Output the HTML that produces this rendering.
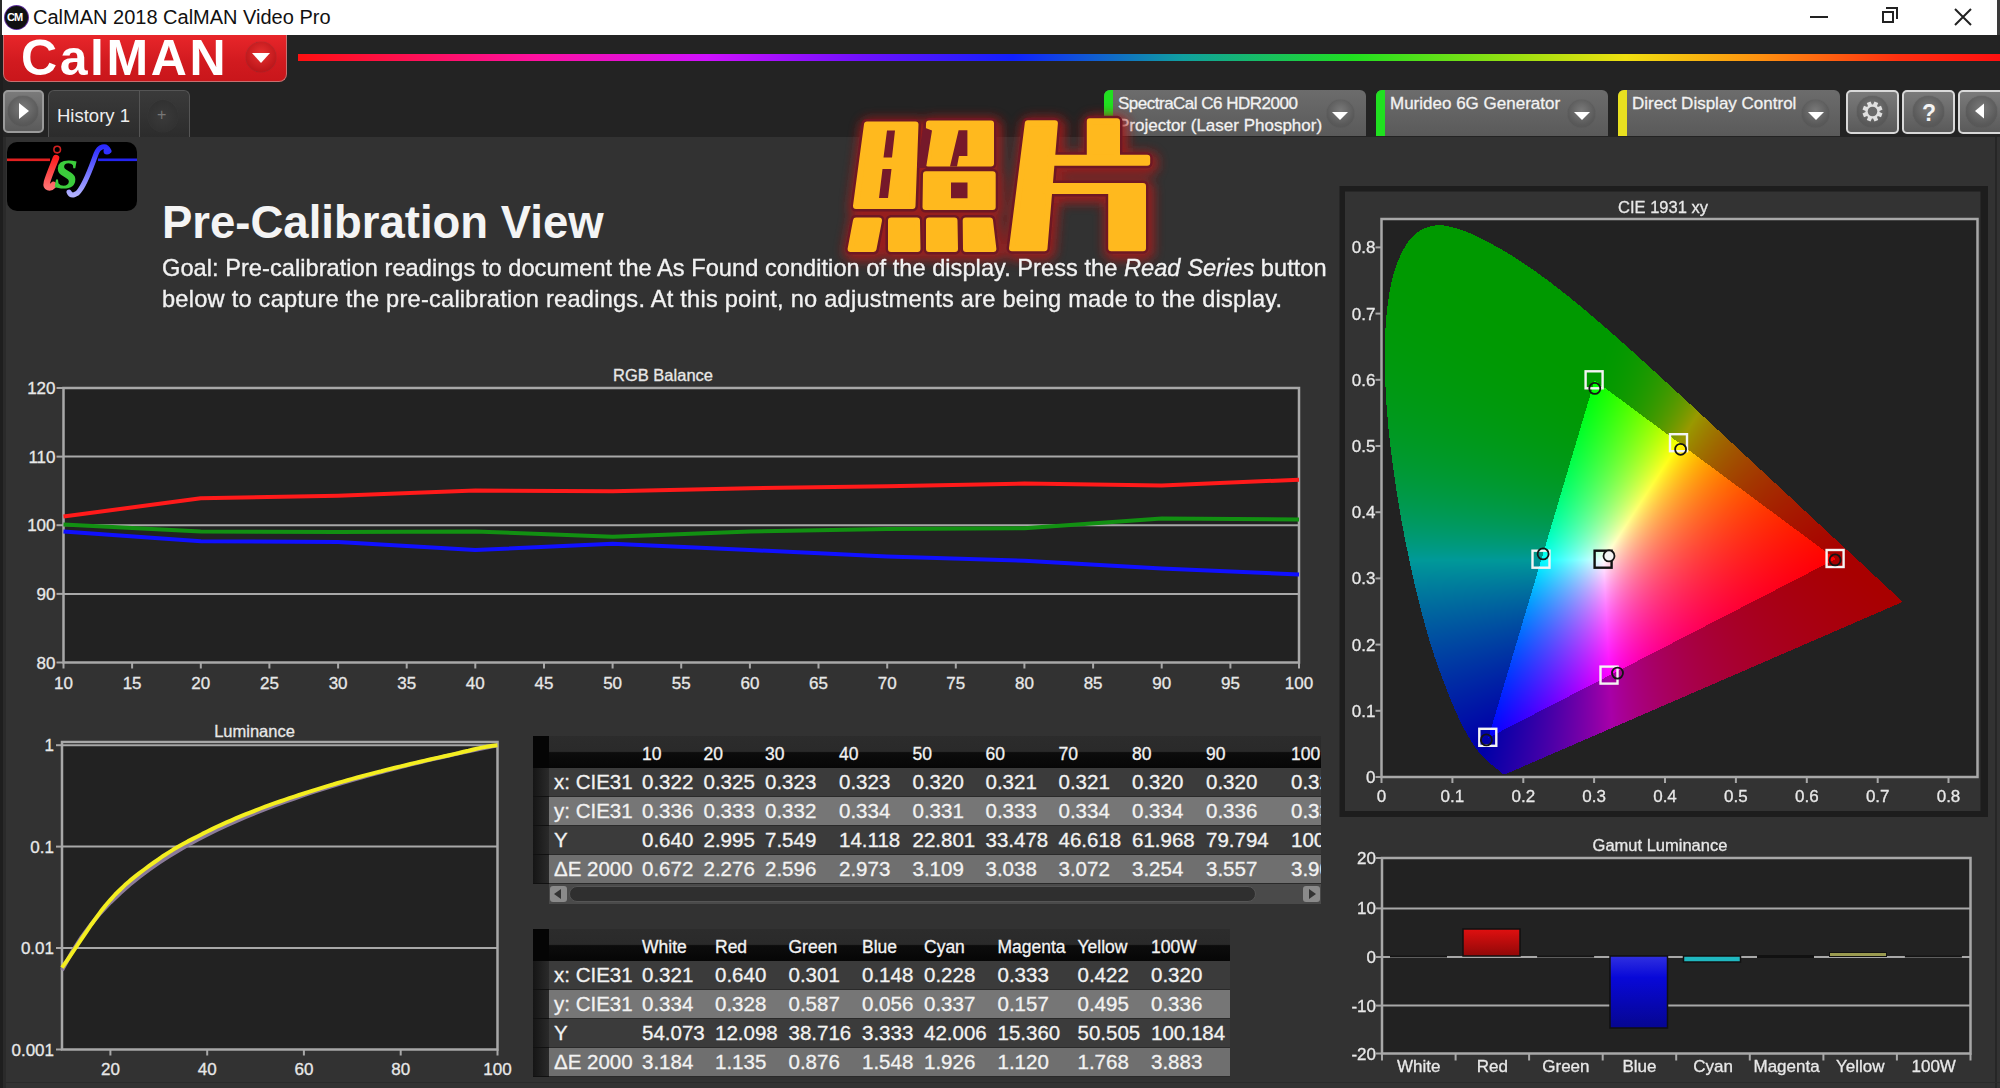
<!DOCTYPE html>
<html><head><meta charset="utf-8">
<style>
*{margin:0;padding:0;box-sizing:border-box}
html,body{width:2000px;height:1088px;overflow:hidden;background:#323232;font-family:"Liberation Sans",sans-serif;position:relative}
.a{position:absolute}
.t{position:absolute;white-space:nowrap;line-height:1}
#titlebar{left:0;top:0;width:2000px;height:35px;background:#fff}
#hdr{left:0;top:35px;width:2000px;height:102px;background:#232323}
#logo{left:3px;top:35px;width:284px;height:47px;border-radius:0 0 8px 8px;background:linear-gradient(#e8262a,#d11a1f 60%,#c9161b);border:1px solid #c87070;border-top:none}
#rainbow{left:298px;top:54px;width:1702px;height:7px;background:linear-gradient(90deg,#ff1010 0%,#ff10a0 14%,#d010ff 24%,#7010ff 33%,#1020ff 42%,#10a0a0 52%,#20e020 62%,#a0e010 72%,#f0e010 78%,#ff9010 86%,#ff3010 94%,#ff1010 100%)}
.dev{position:absolute;top:90px;height:46px;border-radius:6px 6px 0 0;background:linear-gradient(#6c6c6c,#5a5a5a);overflow:hidden}
.dev .bar{position:absolute;left:0;top:0;width:9px;height:46px}
.dev .txt{position:absolute;left:14px;top:3px;color:#f2f2f2;font-size:17px;line-height:21.5px;white-space:nowrap;-webkit-text-stroke:0.3px #f2f2f2}
.circ{position:absolute;border-radius:50%;background:radial-gradient(circle at 50% 40%,#7a7a7a,#5a5a5a 65%,#505050);box-shadow:0 0 1px #444}
.tri{position:absolute;width:0;height:0;border-left:9px solid transparent;border-right:9px solid transparent;border-top:10px solid #fff}
.ax{font-family:"Liberation Sans",sans-serif;font-size:17px;fill:#e8e8e8;stroke:#e8e8e8;stroke-width:0.3px}
.ttl{font-family:"Liberation Sans",sans-serif;font-size:16.5px;fill:#e8e8e8;stroke:#e8e8e8;stroke-width:0.3px}
.th{font-size:17.5px;color:#f2f2f2;-webkit-text-stroke:0.3px #f2f2f2}
.td{font-size:20.5px;color:#f2f2f2;-webkit-text-stroke:0.3px #f2f2f2}
.btn{position:absolute;top:90px;height:44px;border-radius:5px;background:linear-gradient(#7a7a7a,#5a5a5a);border:2px solid #9a9a9a}
</style></head><body>
<div id="titlebar" class="a"></div>
<div class="a" style="left:0;top:35px;width:3px;height:1053px;background:#1e1e1e;z-index:5"></div><div class="a" style="left:3px;top:137px;width:3px;height:951px;background:#2a2a2a"></div><div class="a" style="left:0;top:0;width:2px;height:35px;background:#2a2a2a"></div><div class="a" style="left:1995px;top:137px;width:2px;height:951px;background:#262626"></div><div class="a" style="left:1997px;top:0;width:3px;height:35px;background:#3a3a3a"></div><div class="a" style="left:0;top:1082px;width:2000px;height:1px;background:#2a2a2a"></div>
<!-- CM icon -->
<div class="a" style="left:5px;top:6px;width:23px;height:23px;border-radius:50%;background:#111;box-shadow:0 0 0 1px #6030a0"></div>
<div class="t" style="left:7px;top:12px;font-size:11px;font-weight:bold;color:#fff;letter-spacing:-1px">CM</div>
<div class="t" style="left:33px;top:7px;font-size:20px;color:#111">CalMAN 2018 CalMAN Video Pro</div>
<!-- window controls -->
<div class="a" style="left:1810px;top:16px;width:18px;height:2px;background:#222"></div>
<div class="a" style="left:1882px;top:11px;width:12px;height:12px;border:2px solid #222"></div>
<div class="a" style="left:1886px;top:7px;width:12px;height:12px;border-top:2px solid #222;border-right:2px solid #222"></div>
<svg class="a" style="left:1953px;top:7px" width="20" height="20"><path d="M2 2L18 18M18 2L2 18" stroke="#222" stroke-width="2"/></svg>

<div id="hdr" class="a"></div>
<div id="logo" class="a"></div>
<div class="t" style="left:21px;top:33px;font-size:50px;font-weight:bold;color:#fff;letter-spacing:2.6px">CalMAN</div>
<div class="circ" style="left:246px;top:42px;width:30px;height:30px;background:radial-gradient(circle at 50% 40%,#e83030,#b81418 80%)"></div>
<div class="tri" style="left:252px;top:53px"></div>
<div id="rainbow" class="a"></div>

<!-- tabs -->
<div class="btn" style="left:3px;width:41px;top:90px;height:43px"></div>
<div class="circ" style="left:8px;top:96px;width:30px;height:30px"></div>
<div class="a" style="left:19px;top:103px;width:0;height:0;border-top:8px solid transparent;border-bottom:8px solid transparent;border-left:10px solid #fff"></div>
<div class="a" style="left:48px;top:90px;width:142px;height:47px;border-radius:6px 6px 0 0;background:linear-gradient(#3a3a3a,#2c2c2c);border:1px solid #555;border-bottom:none"></div>
<div class="a" style="left:139px;top:91px;width:1px;height:46px;background:#555"></div>
<div class="t" style="left:57px;top:106.5px;font-size:18.5px;color:#eee">History 1</div>
<div class="circ" style="left:148px;top:100px;width:30px;height:32px;background:radial-gradient(circle,#3a3a3a,#2e2e2e)"></div>
<div class="t" style="left:157px;top:107px;font-size:16px;color:#777">+</div>

<!-- devices -->
<div class="dev" style="left:1104px;width:262px"><div class="bar" style="background:#20e020"></div><div class="txt"><span style="letter-spacing:-0.5px">SpectraCal C6 HDR2000</span><br>Projector (Laser Phosphor)</div></div>
<div class="circ" style="left:1327px;top:100px;width:27px;height:27px"></div><div class="tri" style="left:1332px;top:112px;border-width:8px 8px 0 8px"></div>
<div class="dev" style="left:1376px;width:232px"><div class="bar" style="background:#20e020"></div><div class="txt">Murideo 6G Generator</div></div>
<div class="circ" style="left:1568px;top:100px;width:27px;height:27px"></div><div class="tri" style="left:1574px;top:112px;border-width:8px 8px 0 8px"></div>
<div class="dev" style="left:1618px;width:222px"><div class="bar" style="background:#e8e020"></div><div class="txt">Direct Display Control</div></div>
<div class="circ" style="left:1802px;top:100px;width:27px;height:27px"></div><div class="tri" style="left:1808px;top:112px;border-width:8px 8px 0 8px"></div>
<div class="btn" style="left:1846px;width:53px;border-color:#d8d8d8"></div>
<div class="btn" style="left:1902px;width:53px;border-color:#d8d8d8"></div>
<div class="btn" style="left:1958px;width:50px;border-color:#d8d8d8"></div>
<div class="circ" style="left:1857px;top:96px;width:31px;height:31px"></div>
<div class="circ" style="left:1913px;top:96px;width:31px;height:31px"></div>
<div class="circ" style="left:1966px;top:96px;width:31px;height:31px"></div>
<svg class="a" style="left:0;top:0" width="2000" height="140"><polygon points="1879.5,112.1 1882.5,113.5 1881.0,117.2 1877.9,116.0 1877.0,116.9 1878.2,120.0 1874.5,121.5 1873.1,118.5 1871.9,118.5 1870.5,121.5 1866.8,120.0 1868.0,116.9 1867.1,116.0 1864.0,117.2 1862.5,113.5 1865.5,112.1 1865.5,110.9 1862.5,109.5 1864.0,105.8 1867.1,107.0 1868.0,106.1 1866.8,103.0 1870.5,101.5 1871.9,104.5 1873.1,104.5 1874.5,101.5 1878.2,103.0 1877.0,106.1 1877.9,107.0 1881.0,105.8 1882.5,109.5 1879.5,110.9" fill="#e0e0e0"/><circle cx="1872.5" cy="111.5" r="4.8" fill="#6a6a6a"/><polygon points="1975,111 1984,103.5 1984,118.5" fill="#fff"/></svg>
<div class="t" style="left:1922px;top:102px;font-size:23px;font-weight:bold;color:#f4f4f4">?</div>


<!-- isf logo -->
<svg class="a" style="left:0;top:0" width="150" height="220">
<defs><linearGradient id="lgi" x1="0" y1="0" x2="0" y2="1"><stop offset="0" stop-color="#ff2020"/><stop offset="1" stop-color="#ff7070"/></linearGradient>
<linearGradient id="lgf" x1="0" y1="0" x2="0" y2="1"><stop offset="0" stop-color="#2a2aff"/><stop offset="1" stop-color="#b0b0ff"/></linearGradient></defs>
<rect x="7" y="142" width="130" height="69" rx="10" fill="#000"/>
<rect x="7" y="158.5" width="43" height="2.6" fill="#e02020"/>
<rect x="98" y="158.5" width="39" height="2.6" fill="#2424f0"/>
<circle cx="57.2" cy="149.6" r="3.3" fill="none" stroke="#d02020" stroke-width="1.6"/>
<path d="M56 158 C53 166 49 175 47 182 C45.5 188 50 189 53.5 185" fill="none" stroke="url(#lgi)" stroke-width="6.5" stroke-linecap="round"/>
<text x="55" y="188" font-family="Liberation Serif" font-style="italic" font-weight="bold" font-size="60" fill="#3ccc3c">s</text>
<path d="M109 151 C106 144 99 146 96 154 C91 168 86 182 80 190 C77 195 71 197 69 192" fill="none" stroke="url(#lgf)" stroke-width="5" stroke-linecap="round"/>
<circle cx="107" cy="151" r="3.5" fill="#3030ff"/>
</svg>
<!-- title -->
<div class="t" style="left:162px;top:200px;font-size:45.5px;font-weight:bold;color:#f4f4f4">Pre-Calibration View</div>
<div class="t" style="left:162px;top:256.5px;z-index:4;font-size:23.6px;-webkit-text-stroke:0.35px #f2f2f2;color:#f2f2f2;letter-spacing:0.04px">Goal: Pre-calibration readings to document the As Found condition of the display. Press the <i>Read Series</i> button</div><div class="t" style="left:162px;top:287.5px;z-index:4;font-size:23.6px;-webkit-text-stroke:0.35px #f2f2f2;color:#f2f2f2;letter-spacing:0.24px">below to capture the pre-calibration readings. At this point, no adjustments are being made to the display.</div>
<svg class="a" style="left:0;top:0" width="2000" height="1088"><rect x="63.5" y="388" width="1235.5" height="274.5" fill="#222"/><line x1="63.5" y1="456.6" x2="1299" y2="456.6" stroke="#a8a8a8" stroke-width="2"/><line x1="63.5" y1="525.2" x2="1299" y2="525.2" stroke="#a8a8a8" stroke-width="2"/><line x1="63.5" y1="593.9" x2="1299" y2="593.9" stroke="#a8a8a8" stroke-width="2"/><rect x="63.5" y="388" width="1235.5" height="274.5" fill="none" stroke="#a8a8a8" stroke-width="2.5"/><line x1="56.5" y1="388.0" x2="63.5" y2="388.0" stroke="#a8a8a8" stroke-width="2"/><text x="55.5" y="394.0" text-anchor="end" class="ax">120</text><line x1="56.5" y1="456.6" x2="63.5" y2="456.6" stroke="#a8a8a8" stroke-width="2"/><text x="55.5" y="462.6" text-anchor="end" class="ax">110</text><line x1="56.5" y1="525.2" x2="63.5" y2="525.2" stroke="#a8a8a8" stroke-width="2"/><text x="55.5" y="531.2" text-anchor="end" class="ax">100</text><line x1="56.5" y1="593.9" x2="63.5" y2="593.9" stroke="#a8a8a8" stroke-width="2"/><text x="55.5" y="599.9" text-anchor="end" class="ax">90</text><line x1="56.5" y1="662.5" x2="63.5" y2="662.5" stroke="#a8a8a8" stroke-width="2"/><text x="55.5" y="668.5" text-anchor="end" class="ax">80</text><line x1="63.5" y1="662.5" x2="63.5" y2="668.5" stroke="#a8a8a8" stroke-width="2"/><text x="63.5" y="688.5" text-anchor="middle" class="ax">10</text><line x1="132.1" y1="662.5" x2="132.1" y2="668.5" stroke="#a8a8a8" stroke-width="2"/><text x="132.1" y="688.5" text-anchor="middle" class="ax">15</text><line x1="200.8" y1="662.5" x2="200.8" y2="668.5" stroke="#a8a8a8" stroke-width="2"/><text x="200.8" y="688.5" text-anchor="middle" class="ax">20</text><line x1="269.4" y1="662.5" x2="269.4" y2="668.5" stroke="#a8a8a8" stroke-width="2"/><text x="269.4" y="688.5" text-anchor="middle" class="ax">25</text><line x1="338.1" y1="662.5" x2="338.1" y2="668.5" stroke="#a8a8a8" stroke-width="2"/><text x="338.1" y="688.5" text-anchor="middle" class="ax">30</text><line x1="406.7" y1="662.5" x2="406.7" y2="668.5" stroke="#a8a8a8" stroke-width="2"/><text x="406.7" y="688.5" text-anchor="middle" class="ax">35</text><line x1="475.3" y1="662.5" x2="475.3" y2="668.5" stroke="#a8a8a8" stroke-width="2"/><text x="475.3" y="688.5" text-anchor="middle" class="ax">40</text><line x1="544.0" y1="662.5" x2="544.0" y2="668.5" stroke="#a8a8a8" stroke-width="2"/><text x="544.0" y="688.5" text-anchor="middle" class="ax">45</text><line x1="612.6" y1="662.5" x2="612.6" y2="668.5" stroke="#a8a8a8" stroke-width="2"/><text x="612.6" y="688.5" text-anchor="middle" class="ax">50</text><line x1="681.2" y1="662.5" x2="681.2" y2="668.5" stroke="#a8a8a8" stroke-width="2"/><text x="681.2" y="688.5" text-anchor="middle" class="ax">55</text><line x1="749.9" y1="662.5" x2="749.9" y2="668.5" stroke="#a8a8a8" stroke-width="2"/><text x="749.9" y="688.5" text-anchor="middle" class="ax">60</text><line x1="818.5" y1="662.5" x2="818.5" y2="668.5" stroke="#a8a8a8" stroke-width="2"/><text x="818.5" y="688.5" text-anchor="middle" class="ax">65</text><line x1="887.2" y1="662.5" x2="887.2" y2="668.5" stroke="#a8a8a8" stroke-width="2"/><text x="887.2" y="688.5" text-anchor="middle" class="ax">70</text><line x1="955.8" y1="662.5" x2="955.8" y2="668.5" stroke="#a8a8a8" stroke-width="2"/><text x="955.8" y="688.5" text-anchor="middle" class="ax">75</text><line x1="1024.4" y1="662.5" x2="1024.4" y2="668.5" stroke="#a8a8a8" stroke-width="2"/><text x="1024.4" y="688.5" text-anchor="middle" class="ax">80</text><line x1="1093.1" y1="662.5" x2="1093.1" y2="668.5" stroke="#a8a8a8" stroke-width="2"/><text x="1093.1" y="688.5" text-anchor="middle" class="ax">85</text><line x1="1161.7" y1="662.5" x2="1161.7" y2="668.5" stroke="#a8a8a8" stroke-width="2"/><text x="1161.7" y="688.5" text-anchor="middle" class="ax">90</text><line x1="1230.4" y1="662.5" x2="1230.4" y2="668.5" stroke="#a8a8a8" stroke-width="2"/><text x="1230.4" y="688.5" text-anchor="middle" class="ax">95</text><line x1="1299.0" y1="662.5" x2="1299.0" y2="668.5" stroke="#a8a8a8" stroke-width="2"/><text x="1299.0" y="688.5" text-anchor="middle" class="ax">100</text><text x="663" y="381" text-anchor="middle" class="ttl">RGB Balance</text><polyline points="63.5,524.5 200.8,531.5 338.1,532.0 475.3,531.5 612.6,536.8 749.9,531.4 887.2,529.0 1024.4,528.3 1161.7,518.6 1299.0,519.4" fill="none" stroke="#129012" stroke-width="4" stroke-linejoin="round"/><polyline points="63.5,531.5 200.8,541.3 338.1,542.0 475.3,550.0 612.6,543.8 749.9,550.0 887.2,556.6 1024.4,560.7 1161.7,568.6 1299.0,574.5" fill="none" stroke="#1010ff" stroke-width="4" stroke-linejoin="round"/><polyline points="63.5,516.5 200.8,498.3 338.1,495.8 475.3,490.6 612.6,491.3 749.9,488.3 887.2,486.2 1024.4,483.5 1161.7,485.6 1299.0,479.7" fill="none" stroke="#ff1a1a" stroke-width="4" stroke-linejoin="round"/><rect x="62" y="742" width="435.5" height="307.5" fill="#222"/><line x1="62" y1="745.2" x2="497.5" y2="745.2" stroke="#a8a8a8" stroke-width="2"/><line x1="62" y1="846.6" x2="497.5" y2="846.6" stroke="#a8a8a8" stroke-width="2"/><line x1="62" y1="948.0" x2="497.5" y2="948.0" stroke="#a8a8a8" stroke-width="2"/><rect x="62" y="742" width="435.5" height="307.5" fill="none" stroke="#a8a8a8" stroke-width="2.5"/><line x1="56" y1="745.2" x2="62" y2="745.2" stroke="#a8a8a8" stroke-width="2"/><text x="54" y="751.2" text-anchor="end" class="ax">1</text><line x1="56" y1="846.6" x2="62" y2="846.6" stroke="#a8a8a8" stroke-width="2"/><text x="54" y="852.6" text-anchor="end" class="ax">0.1</text><line x1="56" y1="948.0" x2="62" y2="948.0" stroke="#a8a8a8" stroke-width="2"/><text x="54" y="954.0" text-anchor="end" class="ax">0.01</text><line x1="56" y1="1049.5" x2="62" y2="1049.5" stroke="#a8a8a8" stroke-width="2"/><text x="54" y="1055.5" text-anchor="end" class="ax">0.001</text><line x1="110.4" y1="1049.5" x2="110.4" y2="1055.5" stroke="#a8a8a8" stroke-width="2"/><text x="110.4" y="1074.5" text-anchor="middle" class="ax">20</text><line x1="207.2" y1="1049.5" x2="207.2" y2="1055.5" stroke="#a8a8a8" stroke-width="2"/><text x="207.2" y="1074.5" text-anchor="middle" class="ax">40</text><line x1="303.9" y1="1049.5" x2="303.9" y2="1055.5" stroke="#a8a8a8" stroke-width="2"/><text x="303.9" y="1074.5" text-anchor="middle" class="ax">60</text><line x1="400.7" y1="1049.5" x2="400.7" y2="1055.5" stroke="#a8a8a8" stroke-width="2"/><text x="400.7" y="1074.5" text-anchor="middle" class="ax">80</text><line x1="497.5" y1="1049.5" x2="497.5" y2="1055.5" stroke="#a8a8a8" stroke-width="2"/><text x="497.5" y="1074.5" text-anchor="middle" class="ax">100</text><text x="254.5" y="737" text-anchor="middle" class="ttl">Luminance</text><polyline points="62.0,970.3 71.7,952.5 81.4,937.4 91.0,924.4 100.7,912.8 110.4,902.5 120.1,893.2 129.7,884.7 139.4,876.9 149.1,869.6 158.8,862.9 168.5,856.6 178.1,850.7 187.8,845.1 197.5,839.8 207.2,834.8 216.8,830.0 226.5,825.5 236.2,821.1 245.9,817.0 255.6,813.0 265.2,809.1 274.9,805.4 284.6,801.9 294.3,798.5 303.9,795.1 313.6,791.9 323.3,788.8 333.0,785.8 342.7,782.9 352.3,780.1 362.0,777.3 371.7,774.6 381.4,772.0 391.0,769.5 400.7,767.0 410.4,764.6 420.1,762.2 429.8,759.9 439.4,757.7 449.1,755.5 458.8,753.4 468.5,751.2 478.1,749.2 487.8,747.2 497.5,745.2" fill="none" stroke="#8a7a9a" stroke-width="4"/><polyline points="62.0,967.7 66.8,960.8 71.7,953.7 76.5,946.5 81.4,939.2 86.2,932.1 91.0,925.0 95.9,918.2 100.7,911.6 105.5,905.5 110.4,899.8 115.2,894.5 120.1,889.7 124.9,885.1 129.7,880.9 134.6,876.9 139.4,873.1 144.3,869.5 149.1,865.9 153.9,862.5 158.8,859.1 163.6,855.7 168.5,852.6 173.3,849.6 178.1,846.8 183.0,844.1 187.8,841.4 192.7,838.9 197.5,836.4 202.3,833.9 207.2,831.5 212.0,829.1 216.8,826.8 221.7,824.6 226.5,822.4 231.4,820.3 236.2,818.2 241.0,816.2 245.9,814.2 250.7,812.3 255.6,810.4 260.4,808.5 265.2,806.7 270.1,804.9 274.9,803.2 279.8,801.5 284.6,799.9 289.4,798.2 294.3,796.6 299.1,795.0 303.9,793.5 308.8,791.9 313.6,790.4 318.5,788.9 323.3,787.4 328.1,785.9 333.0,784.5 337.8,783.0 342.7,781.6 347.5,780.3 352.3,778.9 357.2,777.5 362.0,776.2 366.9,774.9 371.7,773.7 376.5,772.4 381.4,771.2 386.2,769.9 391.0,768.7 395.9,767.5 400.7,766.4 405.6,765.2 410.4,764.0 415.2,762.9 420.1,761.7 424.9,760.6 429.8,759.5 434.6,758.4 439.4,757.4 444.3,756.3 449.1,755.2 453.9,754.1 458.8,753.0 463.6,751.8 468.5,750.7 473.3,749.5 478.1,748.4 483.0,747.4 487.8,746.5 492.7,745.8 497.5,745.2" fill="none" stroke="#f4ee20" stroke-width="4" stroke-linejoin="round"/><rect x="1339.5" y="186" width="648.5" height="631" fill="#1d1d1d"/><rect x="1345" y="191.5" width="635.5" height="619.5" fill="#333"/><rect x="1381.5" y="219" width="596.0" height="558" fill="#222"/><g id="ciefb"><defs><clipPath id="locclip"><polygon points="1504.9,773.7 1504.9,773.7 1504.8,773.7 1504.8,773.7 1504.7,773.8 1504.6,773.8 1504.5,773.8 1504.4,773.8 1504.3,773.8 1504.2,773.8 1504.1,773.8 1503.9,773.8 1503.7,773.8 1503.6,773.8 1503.4,773.8 1503.2,773.7 1503.0,773.6 1502.8,773.5 1502.6,773.4 1502.4,773.3 1502.2,773.2 1502.0,773.0 1501.8,772.9 1501.5,772.7 1501.2,772.4 1500.9,772.2 1500.5,771.9 1500.1,771.5 1499.7,771.2 1499.2,770.8 1498.8,770.4 1498.4,770.1 1498.0,769.8 1497.7,769.5 1497.4,769.3 1497.1,769.0 1496.9,768.8 1496.6,768.6 1496.3,768.4 1496.0,768.1 1495.7,767.9 1495.3,767.6 1495.0,767.3 1494.6,767.0 1494.2,766.7 1493.8,766.3 1493.4,766.0 1492.9,765.6 1492.5,765.3 1492.0,764.9 1491.6,764.5 1491.1,764.2 1490.6,763.8 1490.1,763.3 1489.6,762.9 1489.1,762.5 1488.5,762.0 1488.0,761.5 1487.4,761.0 1486.8,760.4 1486.2,759.9 1485.5,759.3 1484.9,758.7 1484.2,758.0 1483.6,757.3 1482.9,756.6 1482.2,755.9 1481.5,755.2 1480.7,754.4 1480.0,753.6 1479.2,752.7 1478.4,751.7 1477.5,750.6 1476.6,749.4 1475.7,748.2 1474.8,746.8 1473.8,745.4 1472.7,743.9 1471.7,742.3 1470.6,740.6 1469.5,738.7 1468.3,736.8 1467.1,734.7 1465.9,732.6 1464.6,730.3 1463.3,727.9 1462.0,725.3 1460.6,722.5 1459.2,719.5 1457.7,716.4 1456.2,713.1 1454.7,709.6 1453.1,706.0 1451.4,702.1 1449.7,698.0 1448.0,693.7 1446.2,689.2 1444.4,684.3 1442.4,679.3 1440.5,674.1 1438.4,668.6 1436.4,662.9 1434.3,657.0 1432.2,650.7 1430.2,644.1 1428.1,637.3 1426.1,630.1 1424.0,622.7 1421.9,615.0 1419.8,607.0 1417.8,598.8 1415.7,590.4 1413.7,581.7 1411.7,572.7 1409.6,563.4 1407.6,553.9 1405.6,544.1 1403.6,534.1 1401.7,524.0 1399.9,513.9 1398.2,503.8 1396.5,493.6 1394.9,483.2 1393.4,472.7 1392.0,462.1 1390.6,451.6 1389.4,441.1 1388.3,430.7 1387.3,420.6 1386.5,410.6 1385.8,400.6 1385.2,390.6 1384.7,380.8 1384.3,371.1 1384.1,361.7 1384.1,352.4 1384.3,343.5 1384.6,334.8 1385.1,326.2 1385.7,317.8 1386.5,309.7 1387.5,301.8 1388.6,294.3 1389.9,287.1 1391.4,280.4 1393.0,274.0 1394.9,268.0 1396.9,262.2 1399.1,256.9 1401.4,251.9 1403.9,247.3 1406.4,243.2 1409.1,239.5 1411.8,236.3 1414.8,233.5 1417.8,231.2 1421.0,229.4 1424.2,227.8 1427.5,226.6 1430.8,225.7 1434.2,225.0 1437.5,224.7 1441.0,224.7 1444.5,225.1 1448.1,225.8 1451.7,226.7 1455.3,227.8 1458.9,228.9 1462.4,230.1 1466.0,231.3 1469.6,232.8 1473.3,234.4 1476.9,236.1 1480.5,237.9 1484.1,239.8 1487.6,241.6 1491.2,243.5 1494.6,245.4 1498.1,247.3 1501.5,249.2 1504.9,251.2 1508.2,253.3 1511.6,255.4 1514.9,257.5 1518.2,259.6 1521.5,261.7 1524.8,263.9 1528.1,266.1 1531.3,268.4 1534.6,270.7 1537.8,273.0 1541.0,275.3 1544.2,277.7 1547.5,280.0 1550.7,282.5 1553.9,284.9 1557.1,287.4 1560.3,289.9 1563.5,292.4 1566.7,295.0 1569.9,297.5 1573.1,300.1 1576.3,302.7 1579.4,305.3 1582.6,308.0 1585.8,310.6 1588.9,313.3 1592.1,316.0 1595.3,318.7 1598.4,321.4 1601.6,324.1 1604.8,326.9 1607.9,329.7 1611.1,332.4 1614.2,335.2 1617.4,338.0 1620.6,340.8 1623.7,343.6 1626.9,346.4 1630.1,349.3 1633.3,352.1 1636.4,355.0 1639.6,357.8 1642.8,360.7 1646.0,363.6 1649.1,366.5 1652.3,369.3 1655.4,372.2 1658.6,375.1 1661.7,378.0 1664.9,380.9 1668.0,383.8 1671.2,386.7 1674.3,389.6 1677.5,392.5 1680.6,395.4 1683.8,398.3 1686.9,401.1 1690.0,404.0 1693.2,406.9 1696.3,409.8 1699.4,412.7 1702.5,415.5 1705.6,418.4 1708.7,421.3 1711.7,424.1 1714.8,427.0 1717.8,429.8 1720.9,432.6 1723.9,435.4 1726.9,438.3 1729.9,441.1 1732.9,443.8 1735.9,446.6 1738.9,449.4 1741.8,452.1 1744.8,454.9 1747.7,457.6 1750.6,460.3 1753.5,463.0 1756.4,465.7 1759.2,468.3 1762.0,471.0 1764.9,473.6 1767.7,476.2 1770.4,478.8 1773.2,481.3 1775.9,483.9 1778.6,486.4 1781.3,488.9 1784.0,491.3 1786.6,493.8 1789.2,496.2 1791.8,498.6 1794.3,500.9 1796.8,503.3 1799.3,505.6 1801.7,507.9 1804.2,510.1 1806.5,512.4 1808.8,514.5 1811.1,516.6 1813.3,518.7 1815.5,520.7 1817.7,522.7 1819.8,524.7 1821.9,526.6 1823.9,528.5 1825.9,530.4 1827.9,532.3 1829.9,534.1 1831.8,535.9 1833.7,537.7 1835.6,539.4 1837.4,541.1 1839.2,542.8 1840.9,544.4 1842.6,545.9 1844.1,547.3 1845.6,548.6 1847.0,549.9 1848.4,551.3 1850.0,552.7 1851.6,554.2 1853.4,555.9 1855.5,557.8 1857.7,559.9 1860.1,562.1 1862.6,564.4 1865.0,566.7 1867.4,569.0 1869.6,571.0 1871.6,572.9 1873.4,574.6 1875.1,576.1 1876.6,577.6 1878.1,578.9 1879.5,580.2 1880.8,581.4 1882.0,582.6 1883.3,583.7 1884.4,584.8 1885.6,585.8 1886.6,586.8 1887.6,587.8 1888.6,588.6 1889.5,589.5 1890.3,590.3 1891.1,591.0 1891.9,591.8 1892.6,592.4 1893.3,593.0 1893.9,593.6 1894.5,594.2 1895.1,594.7 1895.6,595.2 1896.1,595.6 1896.5,596.0 1897.0,596.4 1897.3,596.8 1897.7,597.1 1898.0,597.4 1898.3,597.7 1898.6,598.0 1898.9,598.3 1899.3,598.6 1899.6,598.9 1899.9,599.2 1900.2,599.5 1900.6,599.8 1900.8,600.1 1901.1,600.3 1901.3,600.5 1901.5,600.7 1901.7,600.8 1901.8,601.0 1901.9,601.1 1902.0,601.2 1902.1,601.2 1902.2,601.3 1902.3,601.4"/></clipPath><linearGradient id="fbv" x1="0" y1="221" x2="0" y2="777" gradientUnits="userSpaceOnUse"><stop offset="0" stop-color="#009a00"/><stop offset="0.4" stop-color="#009a30"/><stop offset="0.6" stop-color="#008a8a"/><stop offset="0.75" stop-color="#0050a0"/><stop offset="1" stop-color="#0000b8"/></linearGradient><linearGradient id="fbr" x1="1594" y1="380" x2="1899" y2="598" gradientUnits="userSpaceOnUse"><stop offset="0" stop-color="#3a8a00"/><stop offset="0.35" stop-color="#8a6a00"/><stop offset="1" stop-color="#a00000"/></linearGradient><linearGradient id="fbb" x1="1502" y1="0" x2="1899" y2="0" gradientUnits="userSpaceOnUse"><stop offset="0" stop-color="#2000b0"/><stop offset="0.35" stop-color="#9000a0"/><stop offset="1" stop-color="#b00000"/></linearGradient><linearGradient id="fbs0" x1="1594.1" y1="379.8" x2="1678.5" y2="442.7" gradientUnits="userSpaceOnUse"><stop offset="0" stop-color="#00ff00"/><stop offset="1" stop-color="#ffff00"/></linearGradient><linearGradient id="fbs1" x1="1678.5" y1="442.7" x2="1835.1" y2="558.5" gradientUnits="userSpaceOnUse"><stop offset="0" stop-color="#ffff00"/><stop offset="1" stop-color="#ff0000"/></linearGradient><linearGradient id="fbs2" x1="1835.1" y1="558.5" x2="1609.0" y2="675.1" gradientUnits="userSpaceOnUse"><stop offset="0" stop-color="#ff0000"/><stop offset="1" stop-color="#ff00ff"/></linearGradient><linearGradient id="fbs3" x1="1609.0" y1="675.1" x2="1487.8" y2="737.3" gradientUnits="userSpaceOnUse"><stop offset="0" stop-color="#ff00ff"/><stop offset="1" stop-color="#0000ff"/></linearGradient><linearGradient id="fbs4" x1="1487.8" y1="737.3" x2="1541.0" y2="559.2" gradientUnits="userSpaceOnUse"><stop offset="0" stop-color="#0000ff"/><stop offset="1" stop-color="#00ffff"/></linearGradient><linearGradient id="fbs5" x1="1541.0" y1="559.2" x2="1594.1" y2="379.8" gradientUnits="userSpaceOnUse"><stop offset="0" stop-color="#00ffff"/><stop offset="1" stop-color="#00ff00"/></linearGradient><radialGradient id="fbw" cx="1603.1" cy="559.2" r="110" gradientUnits="userSpaceOnUse"><stop offset="0" stop-color="#fff" stop-opacity="1"/><stop offset="1" stop-color="#fff" stop-opacity="0"/></radialGradient></defs><g clip-path="url(#locclip)"><rect x="1381" y="219" width="597" height="559" fill="url(#fbv)"/><polygon points="1594.1,379.8 1643.8,366.6 1906.0,604.9 1835.1,558.5" fill="url(#fbr)"/><polygon points="1487.8,737.3 1835.1,558.5 1906.0,604.9 1502.0,783.6 1466.6,763.8" fill="url(#fbb)"/></g><polygon points="1603.1,559.2 1594.1,379.8 1678.5,442.7" fill="url(#fbs0)" stroke="url(#fbs0)" stroke-width="0.8"/><polygon points="1603.1,559.2 1678.5,442.7 1835.1,558.5" fill="url(#fbs1)" stroke="url(#fbs1)" stroke-width="0.8"/><polygon points="1603.1,559.2 1835.1,558.5 1609.0,675.1" fill="url(#fbs2)" stroke="url(#fbs2)" stroke-width="0.8"/><polygon points="1603.1,559.2 1609.0,675.1 1487.8,737.3" fill="url(#fbs3)" stroke="url(#fbs3)" stroke-width="0.8"/><polygon points="1603.1,559.2 1487.8,737.3 1541.0,559.2" fill="url(#fbs4)" stroke="url(#fbs4)" stroke-width="0.8"/><polygon points="1603.1,559.2 1541.0,559.2 1594.1,379.8" fill="url(#fbs5)" stroke="url(#fbs5)" stroke-width="0.8"/><polygon points="1594.1,379.8 1835.1,558.5 1487.8,737.3" fill="url(#fbw)"/></g><foreignObject x="1381" y="219" width="597" height="559"><canvas id="cie" width="597" height="559" style="display:block"></canvas></foreignObject><rect x="1381.5" y="219" width="596.0" height="558" fill="none" stroke="#a8a8a8" stroke-width="2.5"/><line x1="1375.5" y1="777.0" x2="1381.5" y2="777.0" stroke="#a8a8a8" stroke-width="2"/><text x="1375.5" y="783.0" text-anchor="end" class="ax">0</text><line x1="1381.5" y1="777" x2="1381.5" y2="783" stroke="#a8a8a8" stroke-width="2"/><text x="1381.5" y="802" text-anchor="middle" class="ax">0</text><line x1="1375.5" y1="710.8" x2="1381.5" y2="710.8" stroke="#a8a8a8" stroke-width="2"/><text x="1375.5" y="716.8" text-anchor="end" class="ax">0.1</text><line x1="1452.4" y1="777" x2="1452.4" y2="783" stroke="#a8a8a8" stroke-width="2"/><text x="1452.4" y="802" text-anchor="middle" class="ax">0.1</text><line x1="1375.5" y1="644.6" x2="1381.5" y2="644.6" stroke="#a8a8a8" stroke-width="2"/><text x="1375.5" y="650.6" text-anchor="end" class="ax">0.2</text><line x1="1523.3" y1="777" x2="1523.3" y2="783" stroke="#a8a8a8" stroke-width="2"/><text x="1523.3" y="802" text-anchor="middle" class="ax">0.2</text><line x1="1375.5" y1="578.4" x2="1381.5" y2="578.4" stroke="#a8a8a8" stroke-width="2"/><text x="1375.5" y="584.4" text-anchor="end" class="ax">0.3</text><line x1="1594.1" y1="777" x2="1594.1" y2="783" stroke="#a8a8a8" stroke-width="2"/><text x="1594.1" y="802" text-anchor="middle" class="ax">0.3</text><line x1="1375.5" y1="512.2" x2="1381.5" y2="512.2" stroke="#a8a8a8" stroke-width="2"/><text x="1375.5" y="518.2" text-anchor="end" class="ax">0.4</text><line x1="1665.0" y1="777" x2="1665.0" y2="783" stroke="#a8a8a8" stroke-width="2"/><text x="1665.0" y="802" text-anchor="middle" class="ax">0.4</text><line x1="1375.5" y1="446.0" x2="1381.5" y2="446.0" stroke="#a8a8a8" stroke-width="2"/><text x="1375.5" y="452.0" text-anchor="end" class="ax">0.5</text><line x1="1735.9" y1="777" x2="1735.9" y2="783" stroke="#a8a8a8" stroke-width="2"/><text x="1735.9" y="802" text-anchor="middle" class="ax">0.5</text><line x1="1375.5" y1="379.8" x2="1381.5" y2="379.8" stroke="#a8a8a8" stroke-width="2"/><text x="1375.5" y="385.8" text-anchor="end" class="ax">0.6</text><line x1="1806.8" y1="777" x2="1806.8" y2="783" stroke="#a8a8a8" stroke-width="2"/><text x="1806.8" y="802" text-anchor="middle" class="ax">0.6</text><line x1="1375.5" y1="313.6" x2="1381.5" y2="313.6" stroke="#a8a8a8" stroke-width="2"/><text x="1375.5" y="319.6" text-anchor="end" class="ax">0.7</text><line x1="1877.7" y1="777" x2="1877.7" y2="783" stroke="#a8a8a8" stroke-width="2"/><text x="1877.7" y="802" text-anchor="middle" class="ax">0.7</text><line x1="1375.5" y1="247.4" x2="1381.5" y2="247.4" stroke="#a8a8a8" stroke-width="2"/><text x="1375.5" y="253.4" text-anchor="end" class="ax">0.8</text><line x1="1948.5" y1="777" x2="1948.5" y2="783" stroke="#a8a8a8" stroke-width="2"/><text x="1948.5" y="802" text-anchor="middle" class="ax">0.8</text><text x="1663" y="213" text-anchor="middle" class="ttl">CIE 1931 xy</text><rect x="1594.6" y="550.7" width="17" height="17" fill="none" stroke="#111" stroke-width="2.4"/><rect x="1826.6" y="550.0" width="17" height="17" fill="none" stroke="#f4f4f4" stroke-width="2.4"/><rect x="1585.6" y="371.3" width="17" height="17" fill="none" stroke="#f4f4f4" stroke-width="2.4"/><rect x="1479.3" y="728.8" width="17" height="17" fill="none" stroke="#f4f4f4" stroke-width="2.4"/><rect x="1532.5" y="550.7" width="17" height="17" fill="none" stroke="#f4f4f4" stroke-width="2.4"/><rect x="1600.5" y="666.6" width="17" height="17" fill="none" stroke="#f4f4f4" stroke-width="2.4"/><rect x="1670.0" y="434.2" width="17" height="17" fill="none" stroke="#f4f4f4" stroke-width="2.4"/><circle cx="1609.0" cy="555.9" r="5.5" fill="#f4f4f4" stroke="#151515" stroke-width="1.8"/><circle cx="1835.1" cy="559.9" r="5.5" fill="none" stroke="#151515" stroke-width="1.8"/><circle cx="1594.8" cy="388.4" r="5.5" fill="none" stroke="#151515" stroke-width="1.8"/><circle cx="1486.4" cy="739.9" r="5.5" fill="none" stroke="#151515" stroke-width="1.8"/><circle cx="1543.1" cy="553.9" r="5.5" fill="none" stroke="#151515" stroke-width="1.8"/><circle cx="1617.5" cy="673.1" r="5.5" fill="none" stroke="#151515" stroke-width="1.8"/><circle cx="1680.6" cy="449.3" r="5.5" fill="none" stroke="#151515" stroke-width="1.8"/><rect x="1382" y="858" width="588.5" height="195.5" fill="#222"/><line x1="1382" y1="908.4" x2="1970.5" y2="908.4" stroke="#a8a8a8" stroke-width="2"/><line x1="1382" y1="957.0" x2="1970.5" y2="957.0" stroke="#a8a8a8" stroke-width="2"/><line x1="1382" y1="1005.6" x2="1970.5" y2="1005.6" stroke="#a8a8a8" stroke-width="2"/><rect x="1382" y="858" width="588.5" height="195.5" fill="none" stroke="#a8a8a8" stroke-width="2.5"/><line x1="1376" y1="858.0" x2="1382" y2="858.0" stroke="#a8a8a8" stroke-width="2"/><text x="1376" y="864.0" text-anchor="end" class="ax">20</text><line x1="1376" y1="908.4" x2="1382" y2="908.4" stroke="#a8a8a8" stroke-width="2"/><text x="1376" y="914.4" text-anchor="end" class="ax">10</text><line x1="1376" y1="957.0" x2="1382" y2="957.0" stroke="#a8a8a8" stroke-width="2"/><text x="1376" y="963.0" text-anchor="end" class="ax">0</text><line x1="1376" y1="1005.6" x2="1382" y2="1005.6" stroke="#a8a8a8" stroke-width="2"/><text x="1376" y="1011.6" text-anchor="end" class="ax">-10</text><line x1="1376" y1="1053.5" x2="1382" y2="1053.5" stroke="#a8a8a8" stroke-width="2"/><text x="1376" y="1059.5" text-anchor="end" class="ax">-20</text><line x1="1382.0" y1="1053.5" x2="1382.0" y2="1060.5" stroke="#a8a8a8" stroke-width="2"/><text x="1418.8" y="1071.5" text-anchor="middle" class="ax">White</text><line x1="1455.6" y1="1053.5" x2="1455.6" y2="1060.5" stroke="#a8a8a8" stroke-width="2"/><text x="1492.3" y="1071.5" text-anchor="middle" class="ax">Red</text><line x1="1529.1" y1="1053.5" x2="1529.1" y2="1060.5" stroke="#a8a8a8" stroke-width="2"/><text x="1565.9" y="1071.5" text-anchor="middle" class="ax">Green</text><line x1="1602.7" y1="1053.5" x2="1602.7" y2="1060.5" stroke="#a8a8a8" stroke-width="2"/><text x="1639.5" y="1071.5" text-anchor="middle" class="ax">Blue</text><line x1="1676.2" y1="1053.5" x2="1676.2" y2="1060.5" stroke="#a8a8a8" stroke-width="2"/><text x="1713.0" y="1071.5" text-anchor="middle" class="ax">Cyan</text><line x1="1749.8" y1="1053.5" x2="1749.8" y2="1060.5" stroke="#a8a8a8" stroke-width="2"/><text x="1786.6" y="1071.5" text-anchor="middle" class="ax">Magenta</text><line x1="1823.4" y1="1053.5" x2="1823.4" y2="1060.5" stroke="#a8a8a8" stroke-width="2"/><text x="1860.2" y="1071.5" text-anchor="middle" class="ax">Yellow</text><line x1="1896.9" y1="1053.5" x2="1896.9" y2="1060.5" stroke="#a8a8a8" stroke-width="2"/><text x="1933.7" y="1071.5" text-anchor="middle" class="ax">100W</text><line x1="1970.5" y1="1053.5" x2="1970.5" y2="1060.5" stroke="#a8a8a8" stroke-width="2"/><text x="1660" y="851" text-anchor="middle" class="ttl">Gamut Luminance</text><defs><linearGradient id="gr" x1="0" y1="0" x2="0" y2="1"><stop offset="0" stop-color="#e01010"/><stop offset="1" stop-color="#900808"/></linearGradient><linearGradient id="gb" x1="0" y1="0" x2="0" y2="1"><stop offset="0" stop-color="#3030e0"/><stop offset="0.3" stop-color="#0808d8"/><stop offset="1" stop-color="#060690"/></linearGradient></defs><rect x="1463" y="929" width="57" height="27" fill="url(#gr)" stroke="#111" stroke-width="1.5"/><rect x="1610" y="956" width="57.5" height="72" fill="url(#gb)" stroke="#111" stroke-width="1.5"/><rect x="1683.5" y="956" width="57" height="6" fill="#20b8c0" stroke="#111" stroke-width="1.5"/><rect x="1757" y="955" width="57" height="3" fill="#111"/><rect x="1829.5" y="952.5" width="57" height="4" fill="#9a9a50" stroke="#111" stroke-width="1"/><rect x="1390.0" y="955.5" width="57" height="2" fill="#151515"/><rect x="1537.1" y="955.5" width="57" height="2" fill="#151515"/><rect x="1904.9" y="955.5" width="57" height="2" fill="#151515"/></svg><div class="a" style="left:533px;top:736px;width:16px;height:32px;background:#050505"></div><div class="a" style="left:533px;top:768px;width:16px;height:29px;background:linear-gradient(90deg,#151515,#2a2a2a);border-bottom:1px solid #111"></div><div class="a" style="left:533px;top:797px;width:16px;height:29px;background:linear-gradient(90deg,#151515,#2a2a2a);border-bottom:1px solid #111"></div><div class="a" style="left:533px;top:826px;width:16px;height:29px;background:linear-gradient(90deg,#151515,#2a2a2a);border-bottom:1px solid #111"></div><div class="a" style="left:533px;top:855px;width:16px;height:29px;background:linear-gradient(90deg,#151515,#2a2a2a);border-bottom:1px solid #111"></div><div class="a" style="left:549px;top:736px;width:772px;height:32px;background:linear-gradient(#2c2c2c 0,#2a2a2a 48%,#0c0c0c 52%,#060606 100%)"></div><div class="a" style="left:549px;top:768px;width:772px;height:29px;background:#3b3b3b;border-bottom:1px solid #2a2a2a"></div><div class="a" style="left:549px;top:797px;width:772px;height:29px;background:#767676;border-bottom:1px solid #2a2a2a"></div><div class="a" style="left:549px;top:826px;width:772px;height:29px;background:#3b3b3b;border-bottom:1px solid #2a2a2a"></div><div class="a" style="left:549px;top:855px;width:772px;height:29px;background:#6f6f6f;border-bottom:1px solid #2a2a2a"></div><div class="a" style="left:549px;top:736px;width:772px;height:148px;overflow:hidden"><div class="t th" style="left:93px;top:9.5px">10</div><div class="t th" style="left:154.5px;top:9.5px">20</div><div class="t th" style="left:216px;top:9.5px">30</div><div class="t th" style="left:290px;top:9.5px">40</div><div class="t th" style="left:363.5px;top:9.5px">50</div><div class="t th" style="left:436.5px;top:9.5px">60</div><div class="t th" style="left:509.5px;top:9.5px">70</div><div class="t th" style="left:583px;top:9.5px">80</div><div class="t th" style="left:657px;top:9.5px">90</div><div class="t th" style="left:742px;top:9.5px">100</div><div class="t td" style="left:5px;top:36px">x: CIE31</div><div class="t td" style="left:93px;top:36px">0.322</div><div class="t td" style="left:154.5px;top:36px">0.325</div><div class="t td" style="left:216px;top:36px">0.323</div><div class="t td" style="left:290px;top:36px">0.323</div><div class="t td" style="left:363.5px;top:36px">0.320</div><div class="t td" style="left:436.5px;top:36px">0.321</div><div class="t td" style="left:509.5px;top:36px">0.321</div><div class="t td" style="left:583px;top:36px">0.320</div><div class="t td" style="left:657px;top:36px">0.320</div><div class="t td" style="left:742px;top:36px">0.321</div><div class="t td" style="left:5px;top:65px">y: CIE31</div><div class="t td" style="left:93px;top:65px">0.336</div><div class="t td" style="left:154.5px;top:65px">0.333</div><div class="t td" style="left:216px;top:65px">0.332</div><div class="t td" style="left:290px;top:65px">0.334</div><div class="t td" style="left:363.5px;top:65px">0.331</div><div class="t td" style="left:436.5px;top:65px">0.333</div><div class="t td" style="left:509.5px;top:65px">0.334</div><div class="t td" style="left:583px;top:65px">0.334</div><div class="t td" style="left:657px;top:65px">0.336</div><div class="t td" style="left:742px;top:65px">0.336</div><div class="t td" style="left:5px;top:94px">Y</div><div class="t td" style="left:93px;top:94px">0.640</div><div class="t td" style="left:154.5px;top:94px">2.995</div><div class="t td" style="left:216px;top:94px">7.549</div><div class="t td" style="left:290px;top:94px">14.118</div><div class="t td" style="left:363.5px;top:94px">22.801</div><div class="t td" style="left:436.5px;top:94px">33.478</div><div class="t td" style="left:509.5px;top:94px">46.618</div><div class="t td" style="left:583px;top:94px">61.968</div><div class="t td" style="left:657px;top:94px">79.794</div><div class="t td" style="left:742px;top:94px">100.184</div><div class="t td" style="left:5px;top:123px">ΔE 2000</div><div class="t td" style="left:93px;top:123px">0.672</div><div class="t td" style="left:154.5px;top:123px">2.276</div><div class="t td" style="left:216px;top:123px">2.596</div><div class="t td" style="left:290px;top:123px">2.973</div><div class="t td" style="left:363.5px;top:123px">3.109</div><div class="t td" style="left:436.5px;top:123px">3.038</div><div class="t td" style="left:509.5px;top:123px">3.072</div><div class="t td" style="left:583px;top:123px">3.254</div><div class="t td" style="left:657px;top:123px">3.557</div><div class="t td" style="left:742px;top:123px">3.900</div></div><div class="a" style="left:549px;top:884px;width:772px;height:20px;background:#4a4a4a"></div><div class="a" style="left:550px;top:886px;width:17px;height:16px;border-radius:3px;background:#8a8a8a"></div><div class="a" style="left:554px;top:889px;width:0;height:0;border-top:5px solid transparent;border-bottom:5px solid transparent;border-right:7px solid #333"></div><div class="a" style="left:569px;top:886px;width:687px;height:16px;border-radius:8px;background:#2f2f2f;border:1px solid #555"></div><div class="a" style="left:1303px;top:886px;width:17px;height:16px;border-radius:3px;background:#8a8a8a"></div><div class="a" style="left:1309px;top:889px;width:0;height:0;border-top:5px solid transparent;border-bottom:5px solid transparent;border-left:7px solid #333"></div><div class="a" style="left:533px;top:929px;width:16px;height:32px;background:#050505"></div><div class="a" style="left:533px;top:961px;width:16px;height:29px;background:linear-gradient(90deg,#151515,#2a2a2a);border-bottom:1px solid #111"></div><div class="a" style="left:533px;top:990px;width:16px;height:29px;background:linear-gradient(90deg,#151515,#2a2a2a);border-bottom:1px solid #111"></div><div class="a" style="left:533px;top:1019px;width:16px;height:29px;background:linear-gradient(90deg,#151515,#2a2a2a);border-bottom:1px solid #111"></div><div class="a" style="left:533px;top:1048px;width:16px;height:29px;background:linear-gradient(90deg,#151515,#2a2a2a);border-bottom:1px solid #111"></div><div class="a" style="left:549px;top:929px;width:681px;height:32px;background:linear-gradient(#2c2c2c 0,#2a2a2a 48%,#0c0c0c 52%,#060606 100%)"></div><div class="a" style="left:549px;top:961px;width:681px;height:29px;background:#3b3b3b;border-bottom:1px solid #2a2a2a"></div><div class="a" style="left:549px;top:990px;width:681px;height:29px;background:#767676;border-bottom:1px solid #2a2a2a"></div><div class="a" style="left:549px;top:1019px;width:681px;height:29px;background:#3b3b3b;border-bottom:1px solid #2a2a2a"></div><div class="a" style="left:549px;top:1048px;width:681px;height:29px;background:#6f6f6f;border-bottom:1px solid #2a2a2a"></div><div class="a" style="left:549px;top:929px;width:681px;height:148px;overflow:hidden"><div class="t th" style="left:93px;top:9.5px">White</div><div class="t th" style="left:166px;top:9.5px">Red</div><div class="t th" style="left:239.5px;top:9.5px">Green</div><div class="t th" style="left:313px;top:9.5px">Blue</div><div class="t th" style="left:375px;top:9.5px">Cyan</div><div class="t th" style="left:448.5px;top:9.5px">Magenta</div><div class="t th" style="left:528.5px;top:9.5px">Yellow</div><div class="t th" style="left:602px;top:9.5px">100W</div><div class="t td" style="left:5px;top:36px">x: CIE31</div><div class="t td" style="left:93px;top:36px">0.321</div><div class="t td" style="left:166px;top:36px">0.640</div><div class="t td" style="left:239.5px;top:36px">0.301</div><div class="t td" style="left:313px;top:36px">0.148</div><div class="t td" style="left:375px;top:36px">0.228</div><div class="t td" style="left:448.5px;top:36px">0.333</div><div class="t td" style="left:528.5px;top:36px">0.422</div><div class="t td" style="left:602px;top:36px">0.320</div><div class="t td" style="left:5px;top:65px">y: CIE31</div><div class="t td" style="left:93px;top:65px">0.334</div><div class="t td" style="left:166px;top:65px">0.328</div><div class="t td" style="left:239.5px;top:65px">0.587</div><div class="t td" style="left:313px;top:65px">0.056</div><div class="t td" style="left:375px;top:65px">0.337</div><div class="t td" style="left:448.5px;top:65px">0.157</div><div class="t td" style="left:528.5px;top:65px">0.495</div><div class="t td" style="left:602px;top:65px">0.336</div><div class="t td" style="left:5px;top:94px">Y</div><div class="t td" style="left:93px;top:94px">54.073</div><div class="t td" style="left:166px;top:94px">12.098</div><div class="t td" style="left:239.5px;top:94px">38.716</div><div class="t td" style="left:313px;top:94px">3.333</div><div class="t td" style="left:375px;top:94px">42.006</div><div class="t td" style="left:448.5px;top:94px">15.360</div><div class="t td" style="left:528.5px;top:94px">50.505</div><div class="t td" style="left:602px;top:94px">100.184</div><div class="t td" style="left:5px;top:123px">ΔE 2000</div><div class="t td" style="left:93px;top:123px">3.184</div><div class="t td" style="left:166px;top:123px">1.135</div><div class="t td" style="left:239.5px;top:123px">0.876</div><div class="t td" style="left:313px;top:123px">1.548</div><div class="t td" style="left:375px;top:123px">1.926</div><div class="t td" style="left:448.5px;top:123px">1.120</div><div class="t td" style="left:528.5px;top:123px">1.768</div><div class="t td" style="left:602px;top:123px">3.883</div></div><svg class="a" style="left:0;top:0;z-index:3" width="2000" height="1088">
<defs><filter id="blr" x="-20%" y="-20%" width="140%" height="140%"><feGaussianBlur stdDeviation="5.5"/></filter></defs>
<g transform="translate(2,3)"><path d="M867,124.5 L915.5,124.5 L912.5,206 L856,206ZM929,123.5 L991,123.5 L991,163.5 L928,163.5ZM926,174.3 L992.7,174.3 L992.7,207 L925.5,207ZM856,220.5 L879,220.5 L873.5,249 L850.6,249ZM891,220.5 L917,220.5 L917.5,249 L891,249ZM929,220.5 L954.5,220.5 L955,249 L929,249ZM965.7,220.5 L990,220.5 L993.4,249 L966,249ZM1027.8,123.3 L1054.9,123.3 L1044.5,248.3 L1012,248.3ZM1089.8,121.3 L1117,121.3 L1117,160 L1089.8,160ZM1050,157.8 L1147.2,157.8 L1147.2,162.8 L1050,162.8ZM1045,186 L1142.4,186 L1142.4,191 L1045,191ZM1111.2,186 L1143,186 L1143,248.3 L1111.2,248.3Z" fill="#a81c1c" stroke="#a81c1c" stroke-width="18" stroke-linejoin="round" filter="url(#blr)" opacity="0.85"/></g>
<path d="M867,124.5 L915.5,124.5 L912.5,206 L856,206ZM929,123.5 L991,123.5 L991,163.5 L928,163.5ZM926,174.3 L992.7,174.3 L992.7,207 L925.5,207ZM856,220.5 L879,220.5 L873.5,249 L850.6,249ZM891,220.5 L917,220.5 L917.5,249 L891,249ZM929,220.5 L954.5,220.5 L955,249 L929,249ZM965.7,220.5 L990,220.5 L993.4,249 L966,249ZM1027.8,123.3 L1054.9,123.3 L1044.5,248.3 L1012,248.3ZM1089.8,121.3 L1117,121.3 L1117,160 L1089.8,160ZM1050,157.8 L1147.2,157.8 L1147.2,162.8 L1050,162.8ZM1045,186 L1142.4,186 L1142.4,191 L1045,191ZM1111.2,186 L1143,186 L1143,248.3 L1111.2,248.3Z" fill="#6e1824" stroke="#6e1824" stroke-width="11" stroke-linejoin="round"/>
<path d="M867,124.5 L915.5,124.5 L912.5,206 L856,206ZM929,123.5 L991,123.5 L991,163.5 L928,163.5ZM926,174.3 L992.7,174.3 L992.7,207 L925.5,207ZM856,220.5 L879,220.5 L873.5,249 L850.6,249ZM891,220.5 L917,220.5 L917.5,249 L891,249ZM929,220.5 L954.5,220.5 L955,249 L929,249ZM965.7,220.5 L990,220.5 L993.4,249 L966,249ZM1027.8,123.3 L1054.9,123.3 L1044.5,248.3 L1012,248.3ZM1089.8,121.3 L1117,121.3 L1117,160 L1089.8,160ZM1050,157.8 L1147.2,157.8 L1147.2,162.8 L1050,162.8ZM1045,186 L1142.4,186 L1142.4,191 L1045,191ZM1111.2,186 L1143,186 L1143,248.3 L1111.2,248.3Z" fill="#ffb91e" stroke="#ffb91e" stroke-width="6" stroke-linejoin="round"/>
<path d="M887,130.5 L895,130.5 L892,157.5 L883.5,157.5ZM882.5,169 L891.5,169 L888,198 L879,198ZM958.6,130.2 L967.4,130.2 L967.4,156 L959,156 L957,166.6 L950,166.6ZM951,182.4 L967.5,182.4 L967.5,198.2 L951,198.2ZM923,127 L932,130.5 L926,168 L917,168Z" fill="#76192a"/>
</svg><script>
(function(){
var c=document.getElementById('cie'); if(!c||!c.getContext) return;
var ctx=c.getContext('2d'); var W=c.width,H=c.height;
var L=[[0.1741,0.0050],[0.1740,0.0050],[0.1740,0.0050],[0.1739,0.0049],[0.1738,0.0049],[0.1737,0.0048],[0.1736,0.0048],[0.1735,0.0048],[0.1733,0.0048],[0.1731,0.0048],[0.1729,0.0048],[0.1727,0.0048],[0.1725,0.0048],[0.1722,0.0049],[0.1719,0.0049],[0.1717,0.0050],[0.1714,0.0051],[0.1711,0.0052],[0.1709,0.0054],[0.1706,0.0056],[0.1703,0.0058],[0.1700,0.0060],[0.1697,0.0063],[0.1693,0.0066],[0.1689,0.0069],[0.1684,0.0073],[0.1679,0.0078],[0.1673,0.0083],[0.1667,0.0088],[0.1661,0.0094],[0.1655,0.0099],[0.1649,0.0104],[0.1644,0.0109],[0.1639,0.0113],[0.1635,0.0117],[0.1631,0.0120],[0.1627,0.0124],[0.1624,0.0127],[0.1620,0.0130],[0.1616,0.0134],[0.1611,0.0138],[0.1606,0.0142],[0.1601,0.0147],[0.1595,0.0151],[0.1590,0.0156],[0.1584,0.0161],[0.1578,0.0166],[0.1572,0.0172],[0.1566,0.0177],[0.1560,0.0183],[0.1553,0.0188],[0.1546,0.0194],[0.1540,0.0200],[0.1533,0.0206],[0.1525,0.0213],[0.1518,0.0220],[0.1510,0.0227],[0.1502,0.0235],[0.1494,0.0242],[0.1485,0.0250],[0.1477,0.0259],[0.1468,0.0268],[0.1459,0.0277],[0.1450,0.0287],[0.1440,0.0297],[0.1430,0.0308],[0.1420,0.0318],[0.1410,0.0330],[0.1400,0.0341],[0.1390,0.0354],[0.1379,0.0367],[0.1367,0.0382],[0.1355,0.0399],[0.1342,0.0417],[0.1329,0.0436],[0.1316,0.0456],[0.1302,0.0477],[0.1287,0.0499],[0.1272,0.0524],[0.1257,0.0550],[0.1241,0.0578],[0.1225,0.0608],[0.1208,0.0639],[0.1191,0.0671],[0.1173,0.0706],[0.1155,0.0742],[0.1136,0.0781],[0.1116,0.0823],[0.1096,0.0868],[0.1075,0.0916],[0.1054,0.0966],[0.1032,0.1018],[0.1010,0.1073],[0.0986,0.1131],[0.0963,0.1193],[0.0938,0.1258],[0.0913,0.1327],[0.0887,0.1400],[0.0860,0.1475],[0.0832,0.1554],[0.0803,0.1637],[0.0774,0.1723],[0.0745,0.1813],[0.0716,0.1908],[0.0687,0.2007],[0.0658,0.2111],[0.0629,0.2219],[0.0600,0.2331],[0.0570,0.2447],[0.0541,0.2568],[0.0511,0.2692],[0.0483,0.2819],[0.0454,0.2950],[0.0426,0.3085],[0.0397,0.3226],[0.0368,0.3371],[0.0340,0.3519],[0.0312,0.3669],[0.0285,0.3822],[0.0259,0.3974],[0.0235,0.4127],[0.0212,0.4281],[0.0190,0.4438],[0.0168,0.4597],[0.0148,0.4756],[0.0128,0.4916],[0.0111,0.5074],[0.0095,0.5231],[0.0082,0.5384],[0.0070,0.5535],[0.0060,0.5686],[0.0052,0.5837],[0.0045,0.5985],[0.0040,0.6131],[0.0037,0.6274],[0.0037,0.6413],[0.0039,0.6548],[0.0044,0.6680],[0.0050,0.6809],[0.0059,0.6936],[0.0071,0.7059],[0.0084,0.7178],[0.0100,0.7292],[0.0118,0.7400],[0.0139,0.7502],[0.0162,0.7598],[0.0189,0.7689],[0.0217,0.7776],[0.0248,0.7857],[0.0281,0.7932],[0.0316,0.8002],[0.0352,0.8064],[0.0389,0.8120],[0.0428,0.8168],[0.0469,0.8210],[0.0512,0.8244],[0.0557,0.8272],[0.0602,0.8295],[0.0649,0.8314],[0.0696,0.8328],[0.0743,0.8338],[0.0791,0.8343],[0.0839,0.8343],[0.0889,0.8337],[0.0939,0.8326],[0.0990,0.8313],[0.1041,0.8297],[0.1092,0.8280],[0.1142,0.8262],[0.1192,0.8243],[0.1243,0.8221],[0.1294,0.8197],[0.1346,0.8171],[0.1397,0.8144],[0.1447,0.8116],[0.1497,0.8087],[0.1547,0.8059],[0.1596,0.8031],[0.1644,0.8002],[0.1693,0.7972],[0.1740,0.7942],[0.1788,0.7911],[0.1835,0.7880],[0.1882,0.7848],[0.1929,0.7816],[0.1976,0.7783],[0.2022,0.7750],[0.2068,0.7717],[0.2114,0.7683],[0.2159,0.7649],[0.2205,0.7614],[0.2250,0.7579],[0.2296,0.7543],[0.2342,0.7507],[0.2387,0.7470],[0.2432,0.7433],[0.2478,0.7396],[0.2523,0.7358],[0.2568,0.7320],[0.2613,0.7282],[0.2658,0.7243],[0.2703,0.7204],[0.2748,0.7165],[0.2793,0.7125],[0.2837,0.7085],[0.2882,0.7045],[0.2927,0.7004],[0.2971,0.6964],[0.3016,0.6923],[0.3061,0.6882],[0.3105,0.6841],[0.3150,0.6799],[0.3194,0.6758],[0.3239,0.6716],[0.3284,0.6674],[0.3328,0.6631],[0.3373,0.6589],[0.3418,0.6547],[0.3462,0.6504],[0.3507,0.6461],[0.3552,0.6418],[0.3597,0.6375],[0.3642,0.6332],[0.3686,0.6288],[0.3731,0.6245],[0.3776,0.6202],[0.3820,0.6158],[0.3865,0.6114],[0.3909,0.6071],[0.3954,0.6027],[0.3998,0.5983],[0.4043,0.5940],[0.4087,0.5896],[0.4131,0.5852],[0.4176,0.5809],[0.4220,0.5765],[0.4265,0.5721],[0.4309,0.5678],[0.4353,0.5634],[0.4397,0.5590],[0.4441,0.5547],[0.4485,0.5504],[0.4528,0.5460],[0.4572,0.5417],[0.4616,0.5374],[0.4659,0.5331],[0.4702,0.5288],[0.4745,0.5245],[0.4788,0.5202],[0.4831,0.5159],[0.4873,0.5117],[0.4916,0.5075],[0.4958,0.5033],[0.5000,0.4991],[0.5042,0.4949],[0.5084,0.4907],[0.5125,0.4866],[0.5166,0.4825],[0.5207,0.4784],[0.5248,0.4743],[0.5289,0.4703],[0.5329,0.4663],[0.5369,0.4623],[0.5409,0.4583],[0.5448,0.4544],[0.5487,0.4505],[0.5526,0.4467],[0.5565,0.4428],[0.5603,0.4390],[0.5641,0.4353],[0.5678,0.4315],[0.5715,0.4278],[0.5752,0.4242],[0.5788,0.4206],[0.5824,0.4170],[0.5859,0.4135],[0.5894,0.4100],[0.5929,0.4065],[0.5963,0.4031],[0.5996,0.3998],[0.6029,0.3965],[0.6061,0.3933],[0.6092,0.3902],[0.6123,0.3871],[0.6154,0.3841],[0.6183,0.3811],[0.6213,0.3782],[0.6242,0.3753],[0.6270,0.3725],[0.6298,0.3697],[0.6326,0.3669],[0.6353,0.3642],[0.6380,0.3615],[0.6406,0.3589],[0.6432,0.3563],[0.6457,0.3538],[0.6482,0.3514],[0.6505,0.3491],[0.6527,0.3470],[0.6547,0.3450],[0.6567,0.3430],[0.6588,0.3410],[0.6609,0.3388],[0.6632,0.3365],[0.6658,0.3340],[0.6687,0.3311],[0.6719,0.3279],[0.6753,0.3246],[0.6787,0.3211],[0.6822,0.3176],[0.6855,0.3143],[0.6887,0.3111],[0.6915,0.3083],[0.6940,0.3058],[0.6964,0.3034],[0.6986,0.3013],[0.7006,0.2992],[0.7025,0.2973],[0.7044,0.2955],[0.7062,0.2937],[0.7079,0.2920],[0.7096,0.2903],[0.7111,0.2888],[0.7126,0.2873],[0.7140,0.2859],[0.7154,0.2845],[0.7166,0.2833],[0.7178,0.2821],[0.7190,0.2809],[0.7201,0.2798],[0.7211,0.2788],[0.7221,0.2779],[0.7229,0.2770],[0.7238,0.2762],[0.7246,0.2754],[0.7253,0.2747],[0.7260,0.2740],[0.7266,0.2734],[0.7272,0.2728],[0.7277,0.2723],[0.7282,0.2718],[0.7287,0.2713],[0.7291,0.2709],[0.7295,0.2705],[0.7300,0.2700],[0.7305,0.2695],[0.7309,0.2691],[0.7314,0.2686],[0.7319,0.2681],[0.7323,0.2677],[0.7327,0.2673],[0.7331,0.2669],[0.7334,0.2666],[0.7337,0.2663],[0.7339,0.2661],[0.7341,0.2659],[0.7343,0.2657],[0.7344,0.2656],[0.7345,0.2655],[0.7346,0.2654],[0.7347,0.2653]];
var ox=0.5, sx=708.8, oy=558, sy=662;  // canvas coords: px = ox + x*sx ; py = oy - y*sy
function inPoly(x,y,P){var ins=false;for(var i=0,j=P.length-1;i<P.length;j=i++){var xi=P[i][0],yi=P[i][1],xj=P[j][0],yj=P[j][1];if(((yi>y)!=(yj>y))&&(x<(xj-xi)*(y-yi)/(yj-yi)+xi))ins=!ins;}return ins;}
var img=ctx.createImageData(W,H); var d=img.data;
var tri=[[0.64,0.33],[0.30,0.60],[0.15,0.06]];
function g(v){v=Math.max(0,Math.min(1,v));return Math.pow(v,1.0);}
for(var py=0;py<H;py++){
  var y=(oy-py)/sy; if(y<=0.003) continue;
  for(var px=0;px<W;px++){
    var x=(px-ox)/sx;
    if(!inPoly(x,y,L)) continue;
    var X=x/y, Z=(1-x-y)/y;
    var r=3.2406*X-1.5372-0.4986*Z, gg=-0.9689*X+1.8758+0.0415*Z, b=0.0557*X-0.2040+1.0570*Z;
    var inside = inPoly(x,y,tri);
    var k=1;
    if(!inside){ k=0.6; }
    r=Math.max(0,r); gg=Math.max(0,gg); b=Math.max(0,b);
    var m=Math.max(r,gg,b); r/=m; gg/=m; b/=m;
    var i4=(py*W+px)*4;
    if(!inside){ var e=1+0.6*gg*gg; r=Math.pow(r,e); b=Math.pow(b,e); k=0.66-0.06*gg; }
    d[i4]=Math.round(g(r)*255*k); d[i4+1]=Math.round(g(gg)*255*k); d[i4+2]=Math.round(g(b)*255*k); d[i4+3]=255;
  }
}
ctx.putImageData(img,0,0);
var fbg=document.getElementById('ciefb'); if(fbg) fbg.setAttribute('display','none');
})();
</script>
</body></html>
